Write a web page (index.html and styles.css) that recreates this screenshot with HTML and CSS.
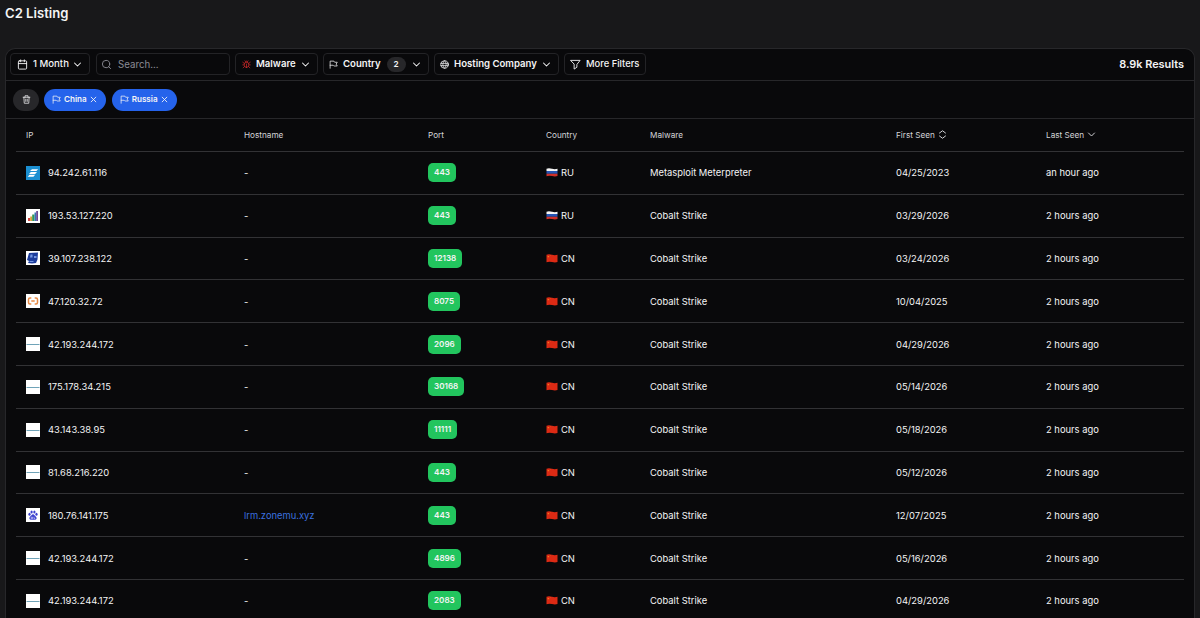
FILE: index.html
```
<!DOCTYPE html>
<html lang="en">
<head>
    <meta charset="UTF-8">
    <meta name="viewport" content="width=device-width, initial-scale=1.0">
    <title>C2 Listing</title>
    <link rel="stylesheet" href="styles.css">
</head>
<body>
    <!-- Icon definitions -->
    <svg class="defs" width="0" height="0">
        <symbol id="calendar" viewBox="0 0 24 24"><path d="M8 2v4M16 2v4M3 10h18"/><rect x="3" y="4" width="18" height="18" rx="2"/></symbol>
        <symbol id="chevron" viewBox="0 0 24 24"><path d="M4 8l8 8 8-8"/></symbol>
        <symbol id="search" viewBox="0 0 24 24"><circle cx="11" cy="11" r="8"/><path d="M21 21l-4.300-4.300"/></symbol>
        <symbol id="bug" viewBox="0 0 24 24"><path d="M8 2l2 2M14 4l2-2M9 7V6a3 3 0 0 1 6 0v1M12 20a6 6 0 0 1-6-6v-3a4 4 0 0 1 4-4h4a4 4 0 0 1 4 4v3a6 6 0 0 1-6 6zM12 20v-9M6 9L2 6M6 13H2M3 21l4-4M18 9l4-3M22 13h-4M17 17l4 4"/></symbol>
        <symbol id="flag" viewBox="0 0 24 24"><path d="M3 22V3h10l2 3h7l-3 5 3 5h-9l-2-2H3"/></symbol>
        <symbol id="globe" viewBox="0 0 24 24"><circle cx="12" cy="12" r="10"/><path d="M2 9h20M2 15h20M12 2c-6 6-6 14 0 20M12 2c6 6 6 14 0 20"/></symbol>
        <symbol id="filter" viewBox="0 0 24 24"><path d="M2 3h20l-7 9v6l-6 4V12z"/></symbol>
        <symbol id="trash" viewBox="0 0 24 24"><path d="M3 6h18M5 6l1 16h12l1-16M8 6V2h8v4M10 11v6M14 11v6"/></symbol>
        <symbol id="close" viewBox="0 0 24 24"><path d="M4 4l16 16M20 4L4 20"/></symbol>
        <symbol id="sort" viewBox="0 0 24 24"><path d="M4 8l8-6 8 6M4 16l8 6 8-6"/></symbol>

        <symbol id="host-stripes" viewBox="0 0 14 14"><path fill="#1b8fd1" d="M0 0h14v14H0z"/><path fill="#fff" d="M6 3.200h6.200l-1.800 1.900H4zM4.800 6H11L9.200 7.900H3zM3.500 8.800h5.700l-1.800 1.900H1.700z"/></symbol>
        <symbol id="host-chart" viewBox="0 0 14 14"><path fill="#fff" d="M0 0h14v14H0z"/><path fill="#d3453d" d="M2 9h2.200v3H2z"/><path fill="#d9a03d" d="M4.200 7.500h2V12h-2z"/><path fill="#2f9a58" d="M6.200 5.500h2.300V12H6.200z"/><path fill="#3675b8" d="M8.500 3.500h1.700V12H8.500z"/><path fill="#694894" d="M10.200 2H12v10h-1.800z"/></symbol>
        <symbol id="host-screen" viewBox="0 0 14 14"><path fill="#fff" d="M0 0h14v14H0z"/><path fill="#1c3c9c" d="M3 2l9-.5-.5 7L10 12l-4 .5L2 12l1-2-2-1z"/><path fill="#7597e2" d="M4.500 3.500h2v3H4zM8 5h2.500v2H8zM3.500 10h4v1h-4z"/></symbol>
        <symbol id="host-brackets" viewBox="0 0 14 14"><path fill="#fff" d="M0 0h14v14H0z"/><path fill="none" stroke="#e98a45" stroke-width="1.500" d="M5.300 4H4Q2.500 4 2.500 5.500v3Q2.500 10 4 10h1.300M8.700 4H10q1.500 0 1.500 1.500v3Q11.500 10 10 10H8.700M5.300 7h3.400"/></symbol>
        <symbol id="host-line" viewBox="0 0 14 14"><path fill="#fff" d="M0 0h14v14H0z"/><path fill="none" stroke="#6fa3b8" d="M.5 7.500h13"/></symbol>
        <symbol id="host-paw" viewBox="0 0 14 14"><path fill="#fff" d="M0 0h14v14H0z"/><g fill="#3b40cf"><ellipse cx="3.500" cy="6.200" rx="1.100" ry="1.500"/><ellipse cx="5.600" cy="4" rx="1.100" ry="1.500"/><ellipse cx="8.400" cy="4" rx="1.100" ry="1.500"/><ellipse cx="10.500" cy="6.200" rx="1.100" ry="1.500"/><path d="M7 6.200c1.300 0 1.800 1.700 3 2.600 1.300 1.200.5 3-1 3H5c-1.500 0-2.300-1.800-1-3 1.200-.9 1.700-2.600 3-2.600z"/></g><path fill="none" stroke="#fff" stroke-width=".5" d="M5.200 9.200h1.300v1.500H5.200zM8 8.800v1.900h1.200"/></symbol>

        <symbol id="flag-ru" viewBox="0 0 12 9"><path fill="#f5f5f5" d="M.5.700Q3 0 6 .8t5.500-.1V3H.5z"/><path fill="#2455b5" d="M.5 3h11v2.800H.5z"/><path fill="#cf3029" d="M.5 5.800h11v2.300Q9 9 6 8.100T.5 8.300z"/></symbol>
        <symbol id="flag-cn" viewBox="0 0 12 9"><path fill="#dc2a14" d="M.5.700Q3 0 6 .8t5.500-.1v7.400Q9 9 6 8.100T.5 8.300z"/><path fill="#ef7a1c" d="M1.700 2h1.400v1.300H1.700zM4.300 1.500h.5v.5h-.5z"/></symbol>
    </svg>

    <h1>C2 Listing</h1>

    <div class="panel">
        <!-- Filter bar -->
        <div class="toolbar">
            <button class="btn month"><svg class="icon"><use href="#calendar"/></svg><span>1 Month</span><svg class="icon chev"><use href="#chevron"/></svg></button>
            <label class="search"><svg class="icon"><use href="#search"/></svg><input type="text" placeholder="Search..."></label>
            <button class="btn malware"><svg class="icon red"><use href="#bug"/></svg><span>Malware</span><svg class="icon chev"><use href="#chevron"/></svg></button>
            <button class="btn country"><svg class="icon"><use href="#flag"/></svg><span>Country</span><span class="count">2</span><svg class="icon chev"><use href="#chevron"/></svg></button>
            <button class="btn hosting"><svg class="icon"><use href="#globe"/></svg><span>Hosting Company</span><svg class="icon chev"><use href="#chevron"/></svg></button>
            <button class="btn more"><svg class="icon"><use href="#filter"/></svg><span>More Filters</span></button>
            <div class="results">8.9k Results</div>
        </div>

        <!-- Active filters -->
        <div class="chips">
            <button class="clear"><svg class="icon"><use href="#trash"/></svg></button>
            <button class="chip"><svg class="icon"><use href="#flag"/></svg><span>China</span><svg class="icon x"><use href="#close"/></svg></button>
            <button class="chip"><svg class="icon"><use href="#flag"/></svg><span>Russia</span><svg class="icon x"><use href="#close"/></svg></button>
        </div>

        <div class="table">
            <div class="row head">
                <div>IP</div>
                <div>Hostname</div>
                <div>Port</div>
                <div>Country</div>
                <div>Malware</div>
                <div>First Seen <svg class="icon"><use href="#sort"/></svg></div>
                <div>Last Seen <svg class="icon"><use href="#chevron"/></svg></div>
            </div>
            <div id="rows"></div>
        </div>
    </div>

    <script>
        const servers = [
            ['stripes', '94.242.61.116', '-', 443, 'RU', 'Metasploit Meterpreter', '04/25/2023', 'an hour ago'],
            ['chart', '193.53.127.220', '-', 443, 'RU', 'Cobalt Strike', '03/29/2026', '2 hours ago'],
            ['screen', '39.107.238.122', '-', 12138, 'CN', 'Cobalt Strike', '03/24/2026', '2 hours ago'],
            ['brackets', '47.120.32.72', '-', 8075, 'CN', 'Cobalt Strike', '10/04/2025', '2 hours ago'],
            ['line', '42.193.244.172', '-', 2096, 'CN', 'Cobalt Strike', '04/29/2026', '2 hours ago'],
            ['line', '175.178.34.215', '-', 30168, 'CN', 'Cobalt Strike', '05/14/2026', '2 hours ago'],
            ['line', '43.143.38.95', '-', 11111, 'CN', 'Cobalt Strike', '05/18/2026', '2 hours ago'],
            ['line', '81.68.216.220', '-', 443, 'CN', 'Cobalt Strike', '05/12/2026', '2 hours ago'],
            ['paw', '180.76.141.175', 'lrm.zonemu.xyz', 443, 'CN', 'Cobalt Strike', '12/07/2025', '2 hours ago'],
            ['line', '42.193.244.172', '-', 4896, 'CN', 'Cobalt Strike', '05/16/2026', '2 hours ago'],
            ['line', '42.193.244.172', '-', 2083, 'CN', 'Cobalt Strike', '04/29/2026', '2 hours ago']
        ];

        document.getElementById('rows').innerHTML = servers.map(([icon, ip, host, port, country, malware, first, last]) => `
            <div class="row">
                <div><svg class="host"><use href="#host-${icon}"/></svg>${ip}</div>
                <div>${host === '-' ? '-' : `<a href="#">${host}</a>`}</div>
                <div><span class="port">${port}</span></div>
                <div><svg class="flag"><use href="#flag-${country.toLowerCase()}"/></svg>${country}</div>
                <div>${malware}</div>
                <div>${first}</div>
                <div>${last}</div>
            </div>`).join('');
    </script>
</body>
</html>
```
FILE: styles.css
```
* {
    box-sizing: border-box;
}
body {
    margin: 0;
    height: 618px;
    overflow: hidden;
    background-color: #18181a;
    color: #f4f4f5;
    font-family: Inter, sans-serif;
    font-size: 9.4px;
}
.defs {
    position: absolute;
}
h1 {
    margin: 0;
    padding: 4px 5px 0;
    height: 48px;
    font-size: 13.1px;
    line-height: 19px;
    font-weight: 600;
}
.icon {
    width: 11px;
    height: 11px;
    flex: none;
    fill: none;
    stroke: currentColor;
    stroke-width: 2;
    stroke-linecap: round;
    stroke-linejoin: round;
}
.red {
    color: #c62828;
}
.panel {
    margin: 0 5px;
    height: 570px;
    background-color: #09090b;
    border: 1px solid #27272a;
    border-bottom: none;
    border-radius: 10px 10px 0 0;
}
.toolbar {
    display: flex;
    align-items: center;
    height: 32px;
    padding: 0 10px 1px 4px;
    border-bottom: 1px solid #27272a;
}
button {
    font-family: inherit;
    color: inherit;
}
.btn, .search {
    display: flex;
    align-items: center;
    height: 22px;
    margin-right: 5px;
    padding: 0 6px;
    background: none;
    border: 1px solid #232326;
    border-radius: 4px;
    font-size: 9.6px;
    font-weight: 600;
    white-space: nowrap;
}
.btn span {
    margin-left: 5px;
    position: relative;
    top: -1px;
}
.btn .chev {
    width: 9px;
    height: 9px;
    margin-left: auto;
    stroke-width: 2.8;
}
.month {
    width: 80px;
    margin-right: 6px;
    padding-right: 7px;
    font-weight: 500;
}
.search {
    width: 134px;
    padding-left: 4px;
    color: #8b8b94;
}
.search input {
    width: 100px;
    margin-left: 6px;
    padding: 0;
    background: none;
    border: none;
    outline: none;
    color: inherit;
    font: 400 9.7px Inter, sans-serif;
}
.search input::placeholder {
    color: #8b8b94;
}
.malware {
    width: 83px;
}
.malware .chev, .country .chev, .hosting .chev {
    margin-right: 1px;
}
.country {
    width: 106px;
}
.country .icon:first-child, .malware .icon:first-child, .hosting .icon:first-child {
    width: 9px;
    height: 9px;
}
.country .icon:first-child, .hosting .icon:first-child {
    margin-left: -1px;
}
.btn .count {
    top: 0;
    width: 19px;
    height: 15px;
    margin-left: 6px;
    background-color: #27272a;
    border-radius: 8px;
    font-size: 8.2px;
    line-height: 15px;
    text-align: center;
}
.hosting {
    width: 125px;
}
.more {
    width: 82px;
    padding-left: 5px;
    font-size: 9.4px;
    font-weight: 500;
}
.results {
    margin-left: auto;
    font-size: 10.9px;
    font-weight: 600;
}
.chips {
    display: flex;
    align-items: center;
    height: 38px;
    padding-left: 7px;
    border-bottom: 1px solid #27272a;
}
.clear, .chip {
    display: flex;
    align-items: center;
    justify-content: center;
    height: 22px;
    padding: 0;
    border: none;
    border-radius: 11px;
}
.clear {
    width: 26px;
    background-color: #27272a;
}
.clear .icon {
    width: 9px;
    height: 9px;
}
.chip {
    padding: 0 9px 0 8px;
    margin-left: 5px;
    background-color: #2563eb;
    font-size: 8.1px;
    font-weight: 600;
}
.chip + .chip {
    margin-left: 6px;
}
.chip .icon {
    width: 9px;
    height: 9px;
}
.chip span {
    margin: 0 3px;
    position: relative;
    top: -1px;
}
.chip .x {
    width: 7px;
    height: 7px;
    stroke-width: 3;
}
.table {
    margin: 0 10px;
}
.row {
    display: grid;
    grid-template-columns: 218px 184px 118px 104px 246px 150px 1fr;
    align-items: center;
    height: 42.8px;
    border-bottom: 1px solid #323235;
}
.row > div {
    display: flex;
    align-items: center;
    padding-left: 10px;
}
.head {
    height: 33px;
    font-size: 8.2px;
    color: #d4d4d8;
}
.head .icon {
    width: 9px;
    height: 9px;
    margin: 0 0 2px 3px;
    stroke-width: 2.6;
}
.host {
    width: 14px;
    height: 14px;
    margin-right: 8px;
}
.flag {
    width: 12px;
    height: 9px;
    margin-right: 3px;
}
.port {
    height: 19px;
    padding: 0 6px;
    background-color: #22c55e;
    border-radius: 5px;
    font-size: 8.1px;
    line-height: 18px;
    font-weight: 600;
}
a {
    color: #3b70df;
    text-decoration: none;
}
#rows {
    height: 466px;
    overflow: hidden;
}
```
